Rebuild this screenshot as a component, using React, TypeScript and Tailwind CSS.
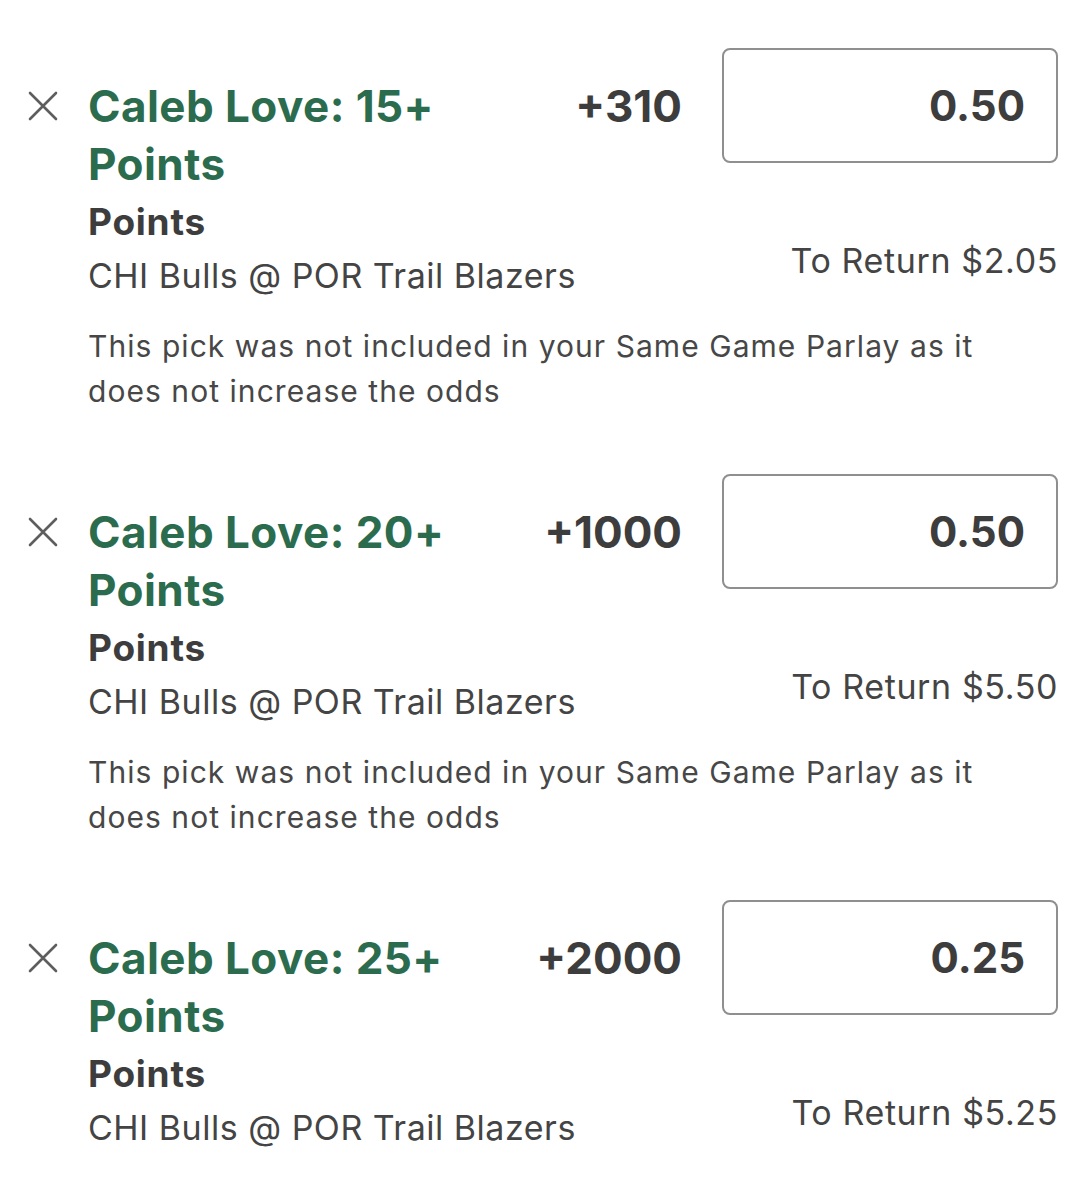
import React from 'react';

type Pick = {
  id: number;
  title: string;
  odds: string;
  stake: string;
  toReturn: string;
  excluded: boolean;
};

const picks: Pick[] = [
  { id: 1, title: 'Caleb Love: 15+ Points', odds: '+310', stake: '0.50', toReturn: '$2.05', excluded: true },
  { id: 2, title: 'Caleb Love: 20+ Points', odds: '+1000', stake: '0.50', toReturn: '$5.50', excluded: true },
  { id: 3, title: 'Caleb Love: 25+ Points', odds: '+2000', stake: '0.25', toReturn: '$5.25', excluded: false },
];

const CloseIcon: React.FC = () => (
  <svg width="30" height="30" viewBox="0 0 30 30" fill="none" className="block">
    <path d="M2 2 L28 28 M28 2 L2 28" stroke="#5e5e5e" strokeWidth="2.6" strokeLinecap="round" />
  </svg>
);

const PickRow: React.FC<{ pick: Pick }> = ({ pick }) => (
  <div className={`flex ${pick.excluded ? 'pb-[60px]' : ''}`}>
    <div className="w-[30px] shrink-0 pt-[43px]">
      <CloseIcon />
    </div>

    <div className="ml-[30px] flex-1 min-w-0">
      <div className="grid grid-cols-[1fr_auto_336px] gap-x-[40px]">
        <h3 className="pt-[29px] text-[44px] leading-[58px] font-bold tracking-[0.01em] text-[#2c6c4e]">
          {pick.title}
        </h3>
        <div className="pt-[29px] text-[44px] leading-[58px] font-bold text-[#3d3d3d]">{pick.odds}</div>
        <div className="h-[115px] rounded-[8px] border-2 border-[#8f8f8f] flex items-center justify-end pr-[31px]">
          <span className="text-[42px] leading-none font-bold text-[#3d3d3d]">{pick.stake}</span>
        </div>

        <div className="col-span-2">
          <p className="mt-[5px] text-[37px] leading-[48px] font-bold tracking-[0.02em] text-[#3d3d3d]">Points</p>
          <p className="mt-[8px] text-[34px] leading-[44px] tracking-[0.015em] text-[#444444] whitespace-nowrap">
            CHI Bulls @ POR Trail Blazers
          </p>
        </div>
        <div className="pt-[46px] text-right text-[34px] leading-[44px] tracking-[0.018em] text-[#444444] whitespace-nowrap">
          To Return {pick.toReturn}
        </div>
      </div>

      {pick.excluded && (
        <p className="mt-[26px] max-w-[905px] text-[30px] leading-[45px] tracking-[0.035em] text-[#474747]">
          This pick was not included in your Same Game Parlay as it does not increase the odds
        </p>
      )}
    </div>
  </div>
);

export default function App() {
  return (
    <div
      className="w-[1087px] h-[1200px] overflow-hidden bg-white pt-[48px] pl-[28px] pr-[29px]"
      style={{ fontFamily: 'Inter, "Liberation Sans", Arial, sans-serif' }}
    >
      {picks.map((pick) => (
        <PickRow key={pick.id} pick={pick} />
      ))}
    </div>
  );
}
